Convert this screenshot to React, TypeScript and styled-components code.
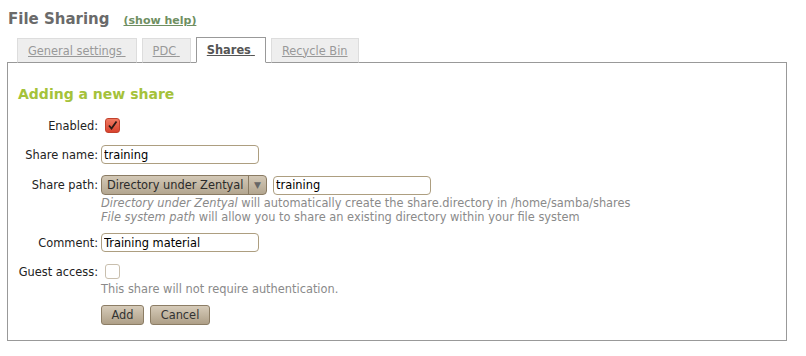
import React from 'react'
import styled, { createGlobalStyle } from 'styled-components'

const GlobalStyle = createGlobalStyle`
  body {
    margin: 0;
    background: #ffffff;
    font-family: "DejaVu Sans", Verdana, sans-serif;
    font-size: 11.4px;
    color: #222;
  }
`

const tabs = [
  { label: 'General settings', active: false },
  { label: 'PDC', active: false },
  { label: 'Shares', active: true },
  { label: 'Recycle Bin', active: false },
]

const App = () => {
  return (
    <Page>
      <GlobalStyle />
      <Header>
        <Title>File Sharing</Title>
        <HelpLink href="#">(show help)</HelpLink>
      </Header>
      <TabBar>
        {tabs.map((t) => (
          <Tab key={t.label} $active={t.active}>
            <TabLabel $active={t.active}>{t.label}{t.label === 'Recycle Bin' ? '' : '\u00a0'}</TabLabel>
          </Tab>
        ))}
      </TabBar>
      <Panel>
        <Heading>Adding a new share</Heading>
        <Form>
          <Row $top={15}>
            <Label>Enabled:</Label>
            <Check $checked>
              <svg width="11" height="11" viewBox="0 0 11 11">
                <path d="M2 5.5 L4.5 8.5 L9.5 1.5" fill="none" stroke="#2a1a16" strokeWidth="1.8" />
              </svg>
            </Check>
          </Row>
          <Row $top={12}>
            <Label>Share name:</Label>
            <TextInput defaultValue="training" $width={158} />
          </Row>
          <Row $top={11}>
            <Label>Share path:</Label>
            <Controls>
              <Select>
                <SelectText>Directory under Zentyal</SelectText>
                <SelectArrow>▼</SelectArrow>
              </Select>
              <TextInput defaultValue="training" $width={158} />
            </Controls>
            <Hint>
              <em>Directory under Zentyal</em> will automatically create the share.directory in /home/samba/shares
              <br />
              <em>File system path</em> will allow you to share an existing directory within your file system
            </Hint>
          </Row>
          <Row $top={9}>
            <Label>Comment:</Label>
            <TextInput defaultValue="Training material" $width={158} />
          </Row>
          <Row $top={12}>
            <Label>Guest access:</Label>
            <Check />
            <Hint $top={3}>This share will not require authentication.</Hint>
          </Row>
          <Row $top={9}>
            <span />
            <Controls>
              <Button $width={43}>Add</Button>
              <Button $width={60}>Cancel</Button>
            </Controls>
          </Row>
        </Form>
      </Panel>
    </Page>
  )
}

export default App

const Page = styled.div`
  width: 780px;
  padding: 8px 7px;
`

const Header = styled.div`
  display: flex;
  align-items: baseline;
  gap: 14px;
  height: 29px;
  padding-left: 1px;
`

const Title = styled.h1`
  margin: 0;
  font-size: 15px;
  line-height: 22px;
  font-weight: bold;
  color: #6a6a6a;
`

const HelpLink = styled.a`
  font-size: 11px;
  font-weight: bold;
  color: #6f8f62;
  text-decoration: underline;
`

const TabBar = styled.div`
  display: flex;
  gap: 5px;
  padding-left: 10px;
  margin-bottom: -1px;
  position: relative;
  z-index: 1;
`

const Tab = styled.div<{ $active?: boolean }>`
  box-sizing: border-box;
  padding: 0 10px;
  display: flex;
  align-items: center;
  background: ${(p) => (p.$active ? '#ffffff' : '#eeeeee')};
  border: 1px solid ${(p) => (p.$active ? '#999999' : '#dddddd')};
  border-bottom: ${(p) => (p.$active ? '1px solid #ffffff' : '1px solid #999999')};
  height: ${(p) => (p.$active ? '26px' : '25px')};
  margin-top: ${(p) => (p.$active ? '0' : '1px')};
`

const TabLabel = styled.span<{ $active?: boolean }>`
  font-size: 11.4px;
  color: ${(p) => (p.$active ? '#555555' : '#999999')};
  font-weight: ${(p) => (p.$active ? 'bold' : 'normal')};
  text-decoration: underline;
`

const Panel = styled.div`
  border: 1px solid #999999;
  height: 277px;
  padding: 0 10px;
`

const Heading = styled.h2`
  margin: 23px 0 0;
  font-size: 14px;
  line-height: 17px;
  font-weight: bold;
  color: #a5c23a;
`

const Form = styled.div`
  display: flex;
  flex-direction: column;
`

const Row = styled.div<{ $top: number }>`
  display: grid;
  grid-template-columns: 80px 1fr;
  column-gap: 3px;
  align-items: center;
  margin-top: ${(p) => p.$top}px;
`

const Label = styled.label`
  justify-self: end;
  white-space: nowrap;
  text-align: right;
  font-size: 11.4px;
  color: #222;
`

const Controls = styled.div`
  display: flex;
  align-items: center;
  gap: 6px;
`

const Check = styled.span<{ $checked?: boolean }>`
  width: 13px;
  height: 13px;
  margin-left: 4px;
  border-radius: 3px;
  display: flex;
  align-items: center;
  justify-content: center;
  background: ${(p) => (p.$checked ? 'linear-gradient(#f07a62, #d9432e)' : '#ffffff')};
  border: 1px solid ${(p) => (p.$checked ? '#c2412c' : '#c9bfae')};
`

const TextInput = styled.input<{ $width: number }>`
  width: ${(p) => p.$width}px;
  height: 19px;
  box-sizing: border-box;
  border: 1px solid #ad9e80;
  border-radius: 4px;
  padding: 0 2px;
  font-family: "DejaVu Sans", Verdana, sans-serif;
  font-size: 11.4px;
  color: #000;
  outline: none;
`

const Select = styled.div`
  width: 166px;
  height: 20px;
  box-sizing: border-box;
  display: flex;
  align-items: center;
  border: 1px solid #8a7b63;
  border-radius: 4px;
  background: linear-gradient(#d3c8b6, #b3a690);
`

const SelectText = styled.span`
  flex: 1;
  padding-left: 5px;
  font-size: 11.4px;
  color: #2b2b2b;
  border-right: 1px solid #8a7b63;
  line-height: 18px;
  white-space: nowrap;
`

const SelectArrow = styled.span`
  width: 17px;
  text-align: center;
  font-size: 9px;
  color: #666;
`

const Hint = styled.div<{ $top?: number }>`
  grid-column: 2;
  margin-top: ${(p) => p.$top ?? 1}px;
  font-size: 11.4px;
  line-height: 14px;
  color: #8a8a8a;
  em {
    font-style: italic;
  }
`

const Button = styled.button<{ $width: number }>`
  width: ${(p) => p.$width}px;
  height: 20px;
  padding: 0;
  border: 1px solid #8c7d65;
  border-radius: 3px;
  background: linear-gradient(#d6cbb9, #ae9f87);
  font-family: "DejaVu Sans", Verdana, sans-serif;
  font-size: 11.4px;
  color: #333;
`
